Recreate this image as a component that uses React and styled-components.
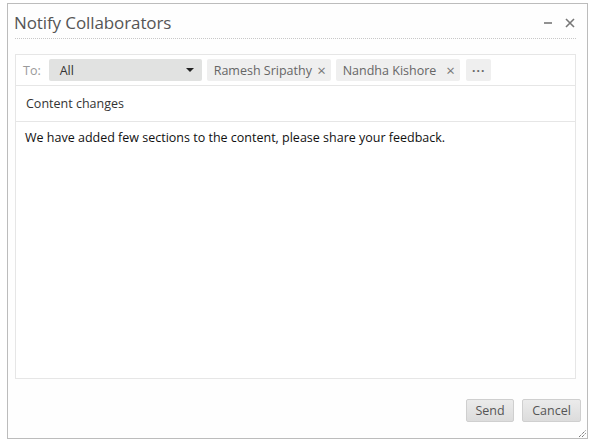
import styled, { createGlobalStyle } from "styled-components";

const GlobalStyle = createGlobalStyle`
  html, body {
    margin: 0;
    padding: 0;
    background: #fff;
    font-family: "Open Sans", "Noto Sans", sans-serif;
  }
`;

const recipients = ["Ramesh Sripathy", "Nandha Kishore"];

const App = () => {
  return (
    <>
      <GlobalStyle />
      <Dialog>
        <Header>
          <Title>Notify Collaborators</Title>
          <HeaderActions>
            <HeaderIcon aria-label="minimize">
              <svg width="9" height="9" viewBox="0 0 9 9">
                <path d="M0 5h8" stroke="#777" strokeWidth="1.6" />
              </svg>
            </HeaderIcon>
            <HeaderIcon aria-label="close">
              <svg width="10" height="10" viewBox="0 0 10 10">
                <path d="M1 1l8 8M9 1l-8 8" stroke="#777" strokeWidth="1.6" />
              </svg>
            </HeaderIcon>
          </HeaderActions>
        </Header>

        <Composer>
          <ToRow>
            <ToLabel>To:</ToLabel>
            <Select>
              <span>All</span>
              <Caret />
            </Select>
            {recipients.map((name) => (
              <Chip key={name}>
                {name}
                <ChipClose>×</ChipClose>
              </Chip>
            ))}
            <More>···</More>
          </ToRow>
          <Subject>Content changes</Subject>
          <Message>
            We have added few sections to the content, please share your feedback.
          </Message>
        </Composer>

        <Footer>
          <Button $w={48}>Send</Button>
          <Button $w={59}>Cancel</Button>
        </Footer>
        <Grip>
          <svg width="7" height="7" viewBox="0 0 7 7">
            <path d="M0 7L7 0M3 7L7 3" stroke="#444" strokeWidth="1" strokeDasharray="1 1" />
          </svg>
        </Grip>
      </Dialog>
    </>
  );
};

const Dialog = styled.div`
  position: relative;
  box-sizing: border-box;
  width: 581px;
  height: 436px;
  margin: 3px 0 0 7px;
  border: 1px solid #bcbcbc;
  background: #fefefe;
  padding: 0 11px 0 7px;
  display: flex;
  flex-direction: column;
`;

const Header = styled.div`
  box-sizing: border-box;
  height: 35px;
  padding-top: 3px;
  display: flex;
  align-items: center;
  justify-content: space-between;
  border-bottom: 1px dotted #c8c8c8;
`;

const Title = styled.h1`
  margin: 0 0 0 -1px;
  font-size: 17px;
  font-weight: 400;
  color: #555;
  letter-spacing: -0.1px;
`;

const HeaderActions = styled.div`
  display: flex;
  align-items: center;
  gap: 12px;
  margin-right: 1px;
`;

const HeaderIcon = styled.span`
  display: flex;
  align-items: center;
`;

const Composer = styled.div`
  margin-top: 15px;
  height: 325px;
  box-sizing: border-box;
  border: 1px solid #e6e6e6;
  background: #fff;
  display: flex;
  flex-direction: column;
`;

const ToRow = styled.div`
  height: 30px;
  border-bottom: 1px solid #e6e6e6;
  display: flex;
  align-items: center;
  padding: 0 6px 0 7px;
  font-size: 12.5px;
`;

const ToLabel = styled.span`
  color: #9a9a9a;
  margin-right: 8px;
`;

const Select = styled.div`
  box-sizing: border-box;
  width: 153px;
  height: 22px;
  background: #e1e2e1;
  border-radius: 2px;
  display: flex;
  align-items: center;
  justify-content: space-between;
  padding: 0 8px 0 11px;
  color: #333;
  margin-right: 5px;
`;

const Caret = styled.span`
  width: 0;
  height: 0;
  border-left: 4px solid transparent;
  border-right: 4px solid transparent;
  border-top: 4px solid #222;
`;

const Chip = styled.div`
  box-sizing: border-box;
  width: 124px;
  height: 22px;
  background: #efefef;
  border-radius: 2px;
  display: flex;
  align-items: center;
  justify-content: space-between;
  padding: 0 5px 0 7px;
  color: #666;
  margin-right: 5px;
`;

const ChipClose = styled.span`
  color: #777;
  font-size: 15px;
  line-height: 1;
`;

const More = styled.div`
  width: 25px;
  height: 22px;
  margin-left: 1px;
  background: #efefef;
  border-radius: 2px;
  display: flex;
  align-items: center;
  justify-content: center;
  color: #666;
  font-size: 12px;
  font-weight: 700;
  letter-spacing: 1px;
  padding-left: 1px;
  box-sizing: border-box;
`;

const Subject = styled.div`
  height: 35px;
  border-bottom: 1px solid #e6e6e6;
  display: flex;
  align-items: center;
  padding: 0 10px;
  font-size: 12.5px;
  color: #333;
`;

const Message = styled.div`
  padding: 7px 9px;
  font-size: 12.5px;
  color: #111;
`;

const Footer = styled.div`
  display: flex;
  justify-content: flex-end;
  gap: 8px;
  margin: 20px -5px 0 0;
`;

const Button = styled.button`
  box-sizing: border-box;
  height: 23px;
  width: ${({ $w }) => $w}px;
  padding: 0;
  font-family: inherit;
  font-size: 12.5px;
  color: #555;
  background: linear-gradient(#ebebeb, #dcdcdc);
  border: 1px solid #cfcfcf;
  border-radius: 2px;
`;

const Grip = styled.span`
  position: absolute;
  right: 1px;
  bottom: 1px;
  display: flex;
`;

export default App;
